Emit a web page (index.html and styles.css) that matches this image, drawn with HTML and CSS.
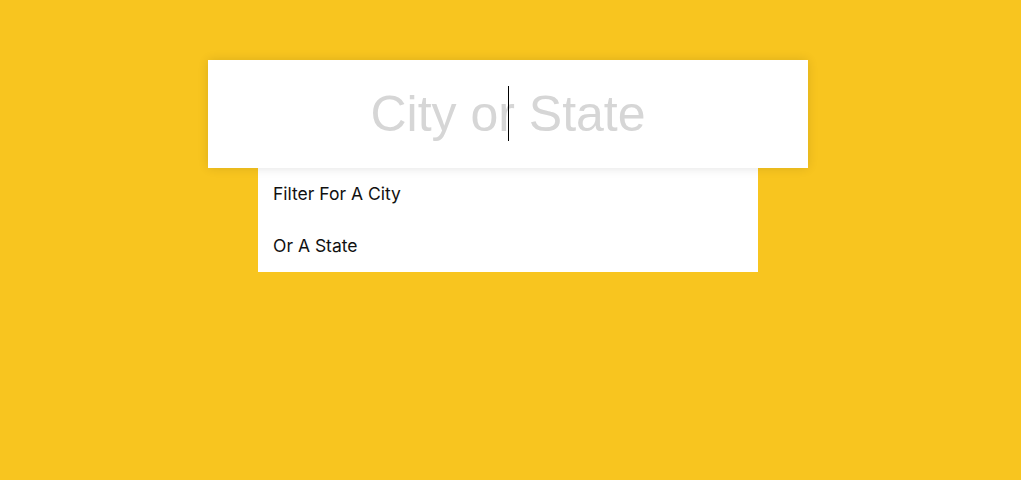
FILE: index.html
```html
<!DOCTYPE html>
<html>
<head>
<meta charset="utf-8">
<link rel="stylesheet" href="styles.css">
</head>
<body>
<div class="search">
  <div class="field">
    <input class="field-input" type="text" placeholder="City or State">
    <span class="caret"></span>
  </div>
  <ul class="suggestions">
    <li class="suggestion">Filter For A City</li>
    <li class="suggestion">Or A State</li>
  </ul>
</div>
</body>
</html>
```
FILE: styles.css
```css
html, body {
  margin: 0;
  padding: 0;
  background: #f8c51f;
  height: 100%;
}
body {
  padding-top: 60px;
  box-sizing: border-box;
}
.search {
  width: 600px;
  margin-left: 208px;
}
.field {
  position: relative;
  height: 108px;
  background: #fff;
  box-shadow: 0 0 10px rgba(0, 0, 0, 0.12);
}
.field-input {
  display: block;
  width: 100%;
  height: 100%;
  border: 0;
  outline: none;
  padding: 0;
  margin: 0;
  background: transparent;
  text-align: center;
  font-family: "Liberation Sans", Arial, sans-serif;
  font-size: 50px;
  color: #333;
  caret-color: transparent;
}
.field-input::placeholder {
  color: #d6d6d6;
  opacity: 1;
}
.caret {
  position: absolute;
  left: 300px;
  top: 26px;
  width: 1px;
  height: 55px;
  background: #000;
}
.suggestions {
  list-style: none;
  margin: 0 0 0 50px;
  padding: 0;
  width: 500px;
  background: #fff;
}
.suggestion {
  height: 52px;
  box-sizing: border-box;
  padding: 15px 15px 0;
  font-family: Inter, "Liberation Sans", sans-serif;
  font-size: 17.5px;
  color: #111;
}
```
